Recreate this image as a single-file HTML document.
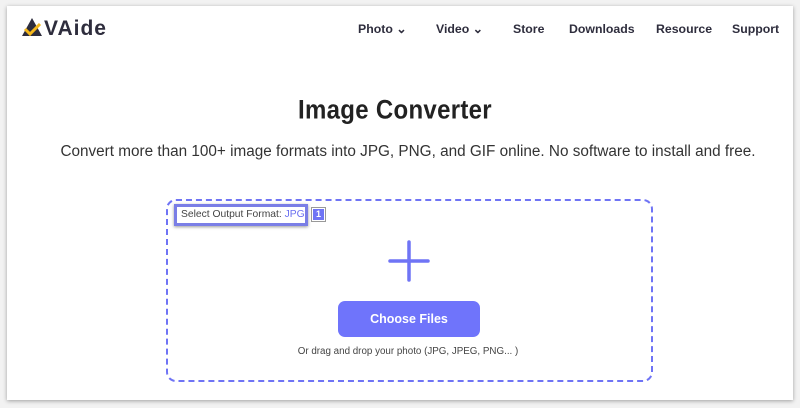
<!DOCTYPE html>
<html><head><style>
*{margin:0;padding:0;box-sizing:border-box}
body{width:800px;height:408px;background:#f2f2f2;font-family:"Liberation Sans",sans-serif;position:relative;overflow:hidden}
.frame{position:absolute;left:7px;top:6px;width:786px;height:394px;background:#fff;box-shadow:0 1px 4px rgba(0,0,0,.35)}
.logo{position:absolute;left:22px;top:17px;font-weight:bold;font-size:21px;color:#2e2d3d;letter-spacing:1px}
.nav{position:absolute;top:22px;font-size:12.3px;font-weight:bold;color:#2e2d3d}
.nav span{position:absolute;white-space:nowrap}
h1{position:absolute;left:0;width:790px;top:97px;text-align:center;font-size:24px;transform:scaleY(1.1);color:#222;font-weight:bold;letter-spacing:0.3px}
.sub{position:absolute;left:0;width:816px;top:143px;text-align:center;font-size:15.3px;color:#333;white-space:nowrap}
.box{position:absolute;left:165.5px;top:198.5px;width:487px;height:183px;border:2px dashed #6f74f5;border-radius:10px}
.sel{position:absolute;left:174px;top:204px;width:134px;height:22px;border:3px solid #7a7ee6;box-shadow:0 1px 3px rgba(0,0,0,.4);font-size:10.3px;color:#444;line-height:16px;padding-left:4px;background:#fff;white-space:nowrap}
.sel b{font-weight:normal;color:#6a6ff0}
.num{position:absolute;left:312px;top:208px;width:13px;height:13px;background:#6f74f5;border:1px solid #fff;box-shadow:0 0 0 1px #999;color:#fff;font-size:9px;text-align:center;line-height:11px;font-weight:bold;border-radius:0}
.btn{position:absolute;left:338px;top:301px;width:142px;height:36px;background:#6f74fb;border-radius:7px;color:#fff;font-weight:bold;font-size:12.5px;text-align:center;line-height:36px}
.drag{position:absolute;left:0;width:816px;top:346px;text-align:center;font-size:9.8px;color:#444}
</style></head><body>
<div class="frame"></div>
<div class="logo"><svg width="22" height="20" viewBox="0 0 22 20" style="vertical-align:-2px"><path d="M0 19 L10 1 L20 19 Z" fill="#2e2d3d"/><path d="M3 12 L8 17 L18 7" stroke="#f5b81c" stroke-width="3" fill="none"/></svg>VAide</div>
<div class="nav">
<span style="left:358px">Photo &#8964;</span>
<span style="left:436px">Video &#8964;</span>
<span style="left:513px">Store</span>
<span style="left:569px">Downloads</span>
<span style="left:656px">Resource</span>
<span style="left:732px">Support</span>
</div>
<h1>Image Converter</h1>
<div class="sub">Convert more than 100+ image formats into JPG, PNG, and GIF online. No software to install and free.</div>
<div class="box"></div>
<div class="sel">Select Output Format: <b>JPG</b></div>
<div class="num">1</div>
<svg style="position:absolute;left:388px;top:240px" width="42" height="42"><path d="M21 2 V40 M2 21 H40" stroke="#6f74f5" stroke-width="3.5" stroke-linecap="round"/></svg>
<div class="btn">Choose Files</div>
<div class="drag">Or drag and drop your photo (JPG, JPEG, PNG... )</div>
</body></html>
